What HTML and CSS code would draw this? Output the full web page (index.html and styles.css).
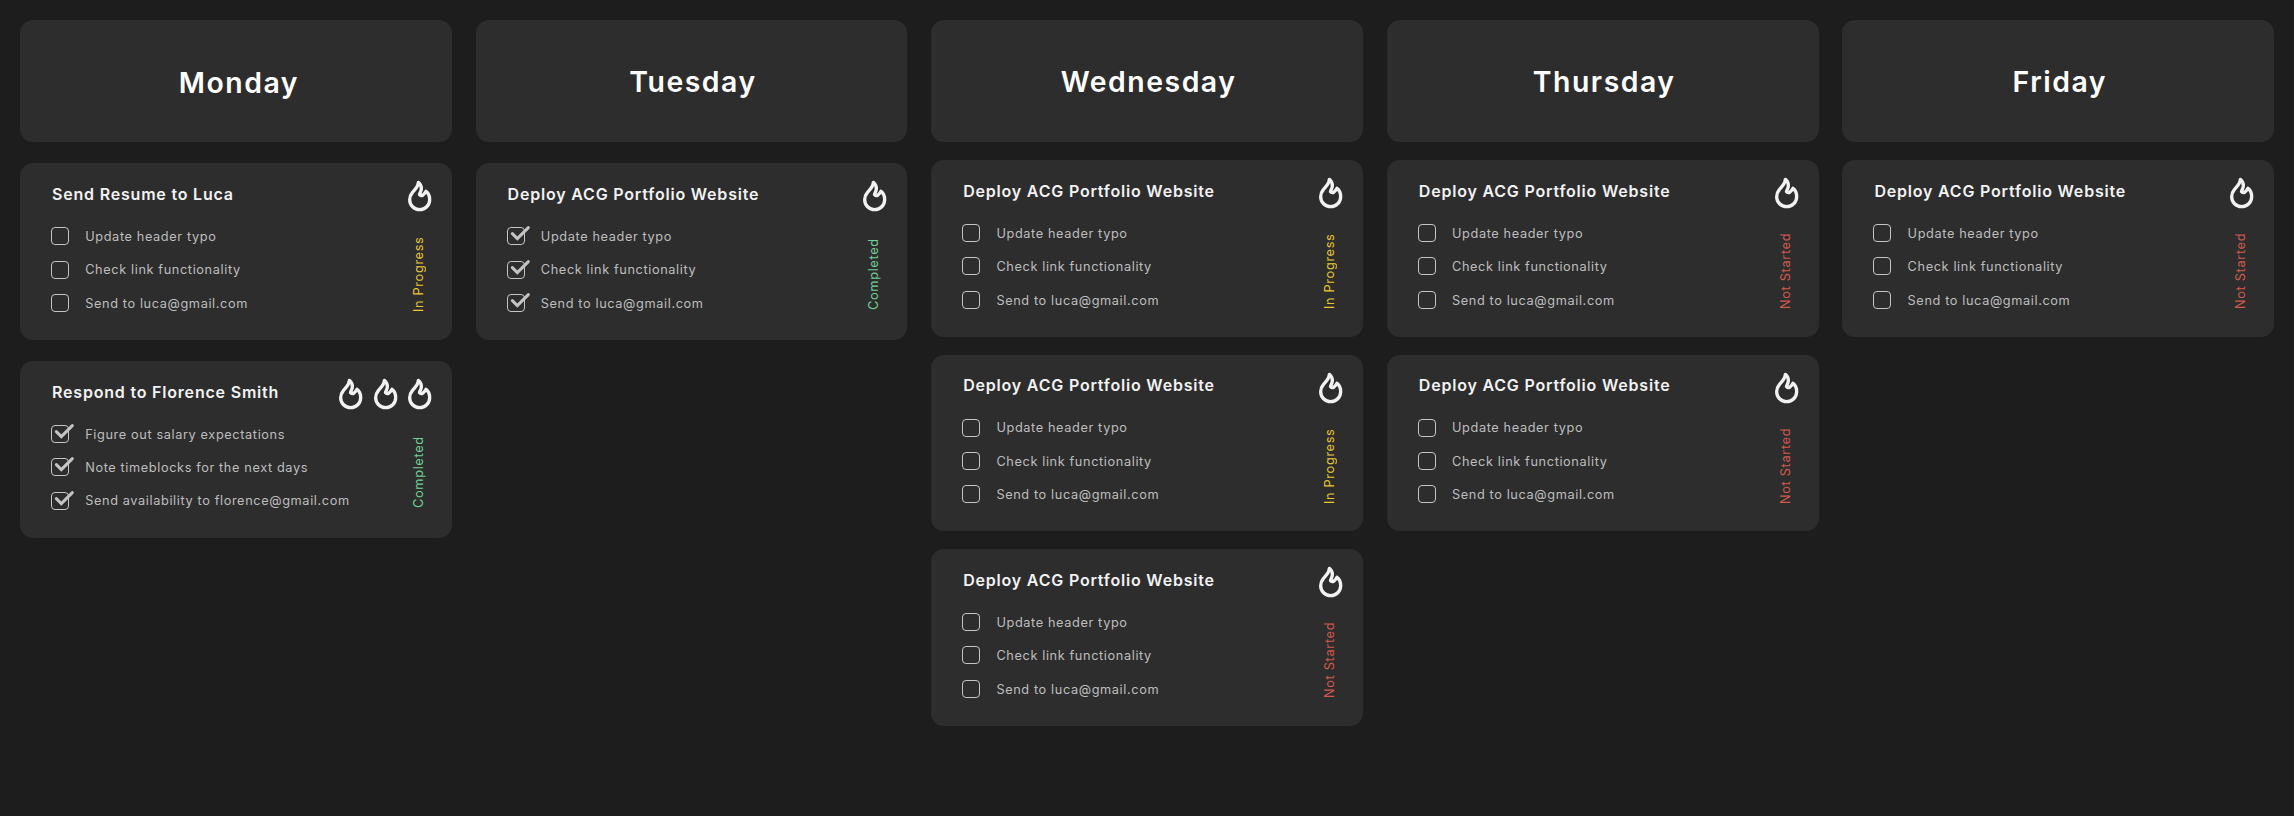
FILE: index.html
```html
<!DOCTYPE html>
<html lang="en">
<head>
<meta charset="utf-8">
<title>Weekly board</title>
<link rel="stylesheet" href="styles.css">
</head>
<body>
<svg class="sprite" aria-hidden="true">
  <symbol id="flame" viewBox="0 0 72 96">
    <path d="M31 7C37 12 40.500 19 40 27C39.500 35 35 39 34.500 44C37 48 42 47 45 45C49 42 52 38 54 34C61 39 65 48 65 59A30 30 0 0 1 5 59C5 50 8 44 13 38C20 29 30 22 31 7Z" fill="none" stroke="#f2f2f2" stroke-width="10" stroke-linejoin="round"/>
  </symbol>
  <symbol id="check" viewBox="0 0 72 60" overflow="visible">
    <path d="M16 20L31 35L64 2" fill="none" stroke="#c4c4c4" stroke-width="9" stroke-linecap="round"/>
  </symbol>
</svg>
<main class="board"></main>
<script src="board.js"></script>
</body>
</html>
```
FILE: styles.css
```css
* { box-sizing: border-box; }
body {
  margin: 0;
  background: #1d1d1d;
  color: #fff;
  font-family: Inter, "Liberation Sans", sans-serif;
}
.sprite { display: none; }
.board {
  display: grid;
  grid-template-columns: repeat(5, 431.8px);
  column-gap: 23.8px;
  min-height: 816px;
  padding: 19.8px 20px;
  align-items: start;
}
.day { display: flex; flex-direction: column; gap: 17.7px; }
.day.roomy { gap: 20.8px; }
.day-header, .card { background: #2d2d2d; border-radius: 13px; }
.day-header {
  height: 122.6px;
  display: flex;
  align-items: center;
  justify-content: center;
}
.day-name { margin: 0; padding: 1.4px 0 0 3px; font-size: 28.4px; font-weight: 600; letter-spacing: 1.52px; line-height: 36px; }
.day-name.low { padding: 4px 0 0 6px; }
.card {
  height: 176.8px;
  display: grid;
  grid-template-columns: minmax(0, 1fr) 24px;
  grid-template-rows: 32px 1fr;
  padding: 17px 20px 22px 31px;
}
.title { margin: 3.8px 0 0 1px; font-size: 16px; font-weight: 600; letter-spacing: .8px; line-height: 20px; color: #f2f2f2; white-space: nowrap; }
.items { list-style: none; margin: 15px 0 0; padding: 0; display: grid; gap: 15.4px; align-content: start; }
.item { display: flex; align-items: center; gap: 16.2px; height: 18px; font-size: 12.75px; letter-spacing: .61px; color: #bdbdbd; white-space: nowrap; }
.label { padding-top: .8px; }
.box { position: relative; width: 18px; height: 18px; border: 1px solid #c4c4c4; border-radius: 4px; }
.check { position: absolute; left: -1px; top: -1px; width: 24px; height: 20px; overflow: visible; }
.flames { display: flex; justify-content: flex-end; gap: 10.3px; }
.flame { display: block; flex: none; width: 24px; height: 32px; }
.status {
  writing-mode: vertical-rl;
  transform: rotate(180deg);
  justify-self: end;
  height: 90px;
  margin: 17px 4px 0 0;
  width: 18px;
  line-height: 18px;
  text-align: center;
  font-size: 12.8px;
  letter-spacing: .64px;
  white-space: nowrap;
}
.progress { color: #e9c52f; }
.completed { color: #6fcf97; }
.not-started { color: #d0594e; }
```
FILE: board.js
```js
const updateTasks = ['Update header typo', 'Check link functionality', 'Send to luca@gmail.com'];
const labels = { progress: 'In Progress', completed: 'Completed', 'not-started': 'Not Started' };
const deploy = status => ({ title: 'Deploy ACG Portfolio Website', tasks: updateTasks, status, flames: 1 });

const days = [
  { name: 'Monday', roomy: true, low: true, cards: [
    { title: 'Send Resume to Luca', tasks: updateTasks, status: 'progress', flames: 1 },
    { title: 'Respond to Florence Smith', status: 'completed', flames: 3,
      tasks: ['Figure out salary expectations', 'Note timeblocks for the next days', 'Send availability to florence@gmail.com'] }
  ] },
  { name: 'Tuesday', roomy: true, cards: [deploy('completed')] },
  { name: 'Wednesday', cards: [deploy('progress'), deploy('progress'), deploy('not-started')] },
  { name: 'Thursday', cards: [deploy('not-started'), deploy('not-started')] },
  { name: 'Friday', cards: [deploy('not-started')] }
];

const renderCard = card => {
  const check = card.status === 'completed' ? '<svg class="check"><use href="#check"/></svg>' : '';
  return `<article class="card">
    <h3 class="title">${card.title}</h3>
    <div class="flames">${'<svg class="flame"><use href="#flame"/></svg>'.repeat(card.flames)}</div>
    <ul class="items">${card.tasks.map(t => `<li class="item"><span class="box">${check}</span><span class="label">${t}</span></li>`).join('')}</ul>
    <div class="status ${card.status}">${labels[card.status]}</div>
  </article>`;
};

document.querySelector('.board').innerHTML = days.map(day => `<section class="day${day.roomy ? ' roomy' : ''}">
  <header class="day-header"><h2 class="day-name${day.low ? ' low' : ''}">${day.name}</h2></header>
  ${day.cards.map(renderCard).join('')}
</section>`).join('');
```
